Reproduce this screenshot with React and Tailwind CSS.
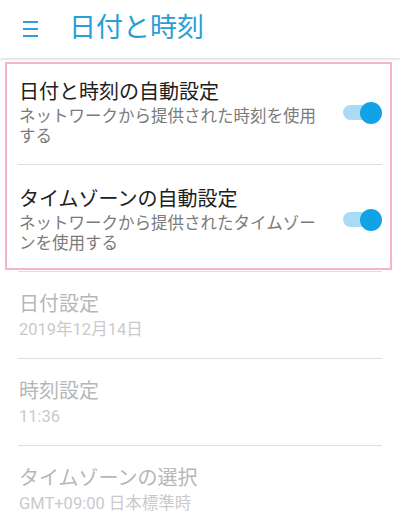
const font = { fontFamily: 'Roboto, "Noto Sans CJK JP", sans-serif' };

function Toggle() {
  return (
    <div className="relative w-[40px] h-[22px] flex items-center shrink-0">
      <div className="absolute left-[1px] right-[3px] h-[15px] rounded-full bg-[#a9dcf4]" />
      <div className="absolute right-0 w-[22px] h-[22px] rounded-full bg-[#11a3e6]" />
    </div>
  );
}

function SwitchRow({ title, sub }) {
  return (
    <div className="mx-[18px] border-b border-[#dddddd] flex items-center pt-[21px] pb-[18px]">
      <div className="flex-1 pl-px mr-[19px]">
        <div className="text-[20px] leading-[26px] text-[#202020]">{title}</div>
        <div className="mt-[2px] text-[16.5px] leading-[19.5px] text-[#7b7b7b]">{sub}</div>
      </div>
      <Toggle />
    </div>
  );
}

function DisabledRow({ title, sub }) {
  return (
    <div className="mx-[18px] border-b border-[#e0e0e0] pl-px pt-[19px] pb-[18px]">
      <div className="text-[20px] leading-[26px] text-[#b7b7b7]">{title}</div>
      <div className="mt-[3px] text-[16.5px] leading-[20px] text-[#cacaca]">{sub}</div>
    </div>
  );
}

export default function App() {
  return (
    <div className="w-[400px] h-[530px] bg-white overflow-hidden" style={font}>
      <header className="relative z-10 h-[58px] bg-white flex items-center shadow-[0_1px_3px_rgba(0,0,0,0.18)]">
        <div className="w-[69px] flex flex-col gap-[5.5px] pl-[23px]">
          <span className="block w-[15px] h-[1.8px] bg-[#2b9fd6]" />
          <span className="block w-[15px] h-[1.8px] bg-[#2b9fd6]" />
          <span className="block w-[15px] h-[1.8px] bg-[#2b9fd6]" />
        </div>
        <h1 className="text-[27px] leading-[34px] text-[#2a9dd4] -mt-[3px]">日付と時刻</h1>
      </header>

      <div className="relative">
        <SwitchRow title="日付と時刻の自動設定" sub="ネットワークから提供された時刻を使用する" />
        <SwitchRow title="タイムゾーンの自動設定" sub="ネットワークから提供されたタイムゾーンを使用する" />
        <div className="absolute top-[4px] bottom-[2px] left-[5px] right-[8px] border-[2.5px] border-[#f4b4cb] pointer-events-none" />
      </div>

      <DisabledRow title="日付設定" sub="2019年12月14日" />
      <DisabledRow title="時刻設定" sub="11:36" />
      <DisabledRow title="タイムゾーンの選択" sub="GMT+09:00 日本標準時" />
    </div>
  );
}
